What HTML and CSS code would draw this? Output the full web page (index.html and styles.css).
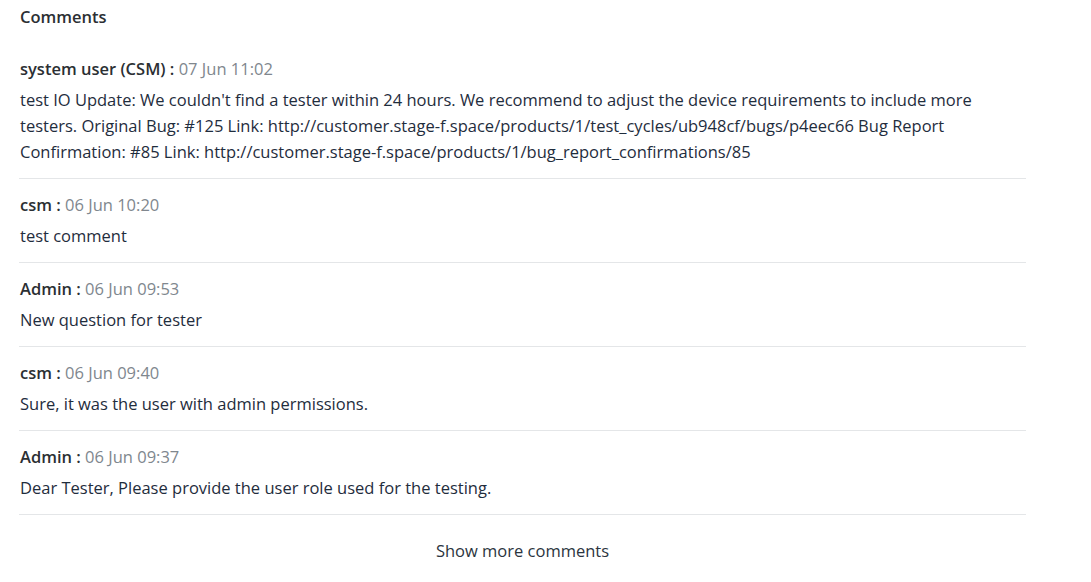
FILE: index.html
```html
<!DOCTYPE html>
<html lang="en">
<head>
<meta charset="utf-8">
<title>Comments</title>
<link rel="stylesheet" href="styles.css">
</head>
<body>
<section class="comments">
  <h2 class="comments-title">Comments</h2>
  <ul class="comment-list">
    <li class="comment">
      <div class="comment-meta"><span class="author">system user (CSM) :</span> <span class="date">07 Jun 11:02</span></div>
      <div class="comment-body">test IO Update: We couldn't find a tester within 24 hours. We recommend to adjust the device requirements to include more testers. Original Bug: #125 Link: http://customer.stage-f.space/products/1/test_cycles/ub948cf/bugs/p4eec66 Bug Report Confirmation: #85 Link: http://customer.stage-f.space/products/1/bug_report_confirmations/85</div>
    </li>
    <li class="comment">
      <div class="comment-meta"><span class="author">csm :</span> <span class="date">06 Jun 10:20</span></div>
      <div class="comment-body">test comment</div>
    </li>
    <li class="comment">
      <div class="comment-meta"><span class="author">Admin :</span> <span class="date">06 Jun 09:53</span></div>
      <div class="comment-body">New question for tester</div>
    </li>
    <li class="comment">
      <div class="comment-meta"><span class="author">csm :</span> <span class="date">06 Jun 09:40</span></div>
      <div class="comment-body">Sure, it was the user with admin permissions.</div>
    </li>
    <li class="comment">
      <div class="comment-meta"><span class="author">Admin :</span> <span class="date">06 Jun 09:37</span></div>
      <div class="comment-body">Dear Tester, Please provide the user role used for the testing.</div>
    </li>
  </ul>
  <div class="show-more"><button class="show-more-btn" type="button">Show more comments</button></div>
</section>
</body>
</html>
```
FILE: styles.css
```css
html, body {
  margin: 0;
  padding: 0;
  background: #ffffff;
}
body {
  font-family: "Open Sans", "Noto Sans", "Liberation Sans", sans-serif;
  color: #1f2d3d;
  font-size: 16.5px;
}
.comments {
  width: 1007px;
  padding: 5px 0 0 19px;
}
.comments-title {
  margin: 0 0 14px 1px;
  font-size: 16.5px;
  line-height: 24px;
  font-weight: 600;
  color: #2b2f33;
}
.comment-list {
  list-style: none;
  margin: 0;
  padding: 0;
}
.comment {
  padding: 14px 0 13px 1px;
  border-bottom: 1px solid #e4e6e8;
}
.comment-meta {
  line-height: 24px;
  font-size: 16.5px;
}
.author {
  font-weight: 600;
  color: #2b2f33;
}
.date {
  color: #80878e;
}
.comment-body {
  margin-top: 6px;
  line-height: 26px;
  font-size: 16.5px;
  color: #1f2d3d;
}
.show-more {
  display: flex;
  justify-content: center;
  padding-top: 24px;
}
.show-more-btn {
  font-family: inherit;
  font-size: 16.5px;
  line-height: 24px;
  color: #2b3540;
  background: none;
  border: none;
  padding: 0;
  cursor: pointer;
}
```
